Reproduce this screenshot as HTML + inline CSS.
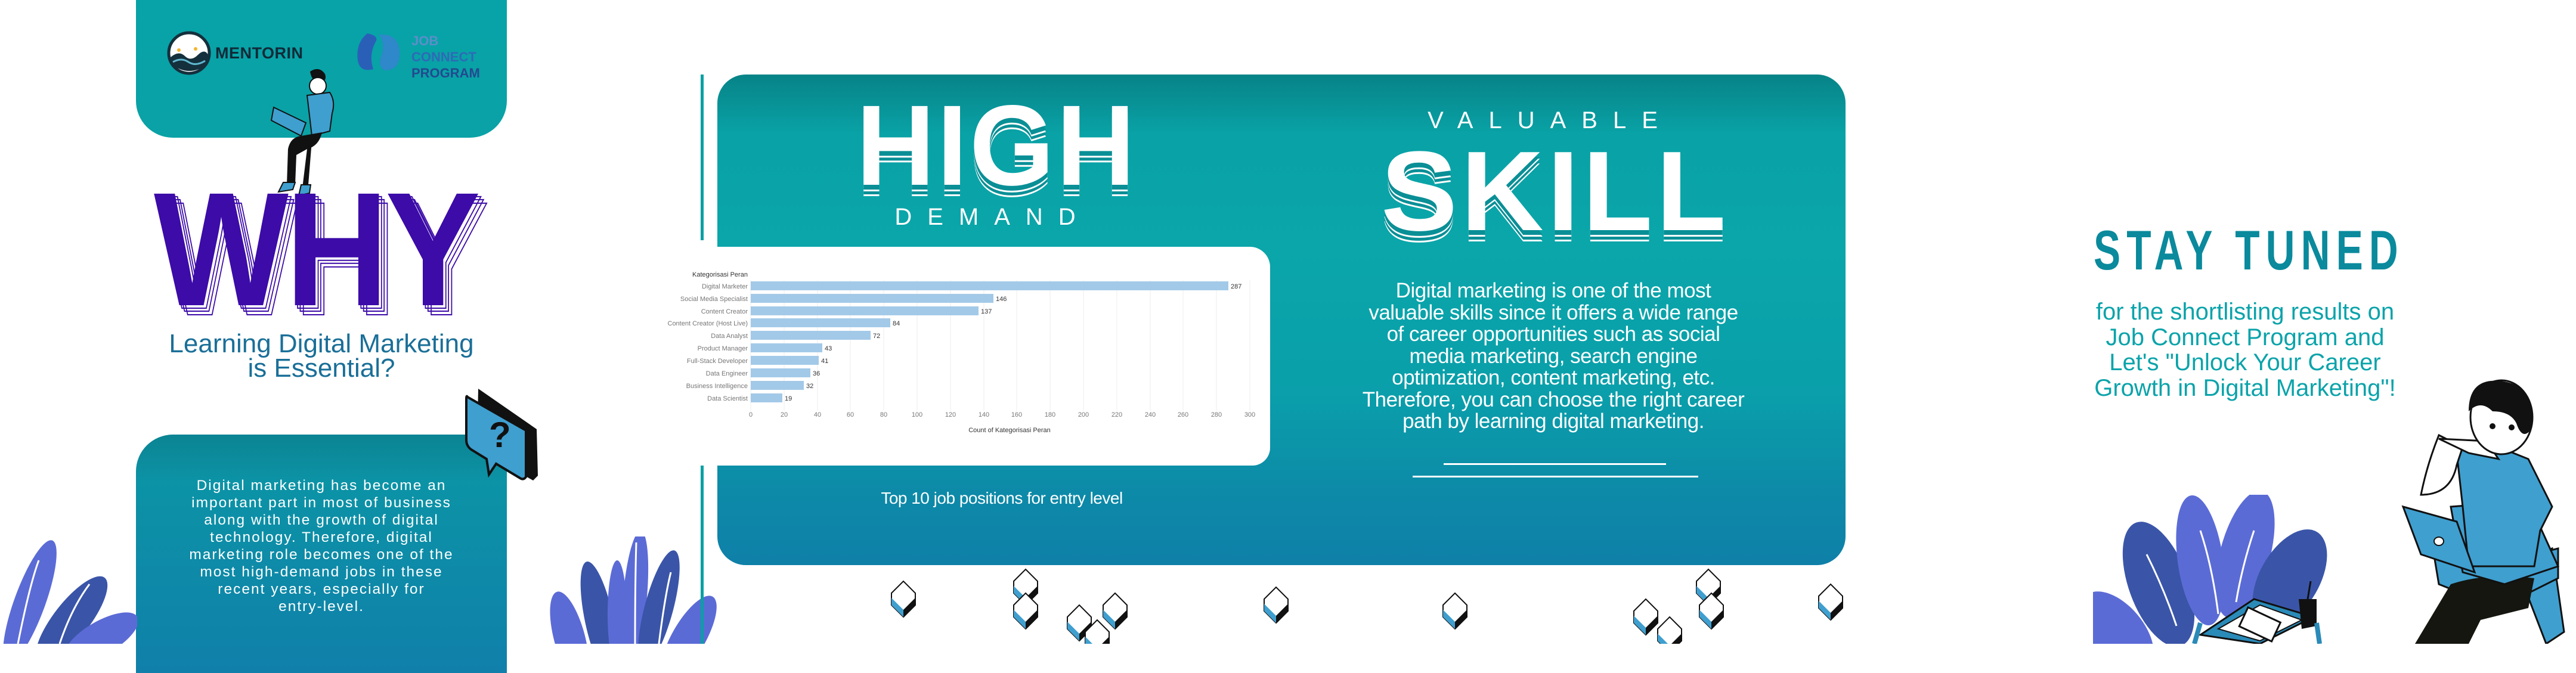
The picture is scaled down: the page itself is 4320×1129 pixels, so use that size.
<!DOCTYPE html>
<html><head><meta charset="utf-8">
<style>
*{margin:0;padding:0;box-sizing:border-box}
body{width:4320px;height:1080px;background:#fff;position:relative;overflow:hidden;font-family:"Liberation Sans",sans-serif}
.abs{position:absolute}
.c{text-align:center;white-space:nowrap}
</style></head><body>

<!-- LEFT PANEL -->
<div class="abs" style="left:228px;top:0;width:622px;height:231px;background:linear-gradient(#07a3a8,#0aa2a6);border-radius:0 0 62px 62px"></div>
<svg class="abs" style="left:280px;top:52px" width="74" height="74" viewBox="0 0 74 74">
<circle cx="37" cy="37" r="34" fill="#fff" stroke="#14303c" stroke-width="5"/>
<path d="M6 44 Q20 32 30 42 T52 40 T70 42 L68 56 Q37 78 8 56Z" fill="#14303c"/>
<path d="M10 52 Q24 44 36 52 T64 50" stroke="#5fb8d0" stroke-width="3" fill="none"/>
<circle cx="20" cy="32" r="3" fill="#f2b630"/><circle cx="48" cy="30" r="3" fill="#f2b630"/>
</svg>
<div class="abs" style="left:361px;top:74px;font-size:27px;font-weight:bold;color:#102a38;letter-spacing:0.5px">MENTORIN</div>
<svg class="abs" style="left:596px;top:52px" width="80" height="72" viewBox="0 0 80 72">
<path d="M20 4 Q0 20 4 50 Q8 70 30 64 Q22 40 34 18 Q40 8 20 4Z" fill="#2a5fb8"/>
<path d="M40 6 Q72 4 74 34 Q76 66 50 66 Q36 60 44 40 Q50 22 40 6Z" fill="#2e88c9"/>
</svg>
<div class="abs" style="left:690px;top:55px;font-size:22px;font-weight:bold;line-height:27px;color:#2e6ab6">
<span style="color:#5b8fc9">JOB</span><br>CONNECT<br><span style="color:#24498f">PROGRAM</span></div>
<svg class="abs" style="left:445px;top:110px" width="135" height="220" viewBox="0 0 135 220">
<path d="M75 10 Q90 0 100 14 Q104 26 92 30 Q78 28 75 10Z" fill="#111"/>
<ellipse cx="88" cy="34" rx="14" ry="14" fill="#fff" stroke="#111" stroke-width="2"/>
<path d="M70 50 L108 45 Q118 60 112 80 L108 110 L78 118 Z" fill="#3f9fcf" stroke="#111" stroke-width="2"/>
<path d="M14 70 L68 96 L60 118 L10 92Z" fill="#3f9fcf" stroke="#111" stroke-width="2"/>
<path d="M60 118 L95 112 Q90 135 70 140 L52 150 L50 200 L36 200 L38 140 Q42 120 60 118Z" fill="#111"/>
<path d="M70 140 L78 126 L72 200 L62 206 Z" fill="#111"/>
<path d="M30 196 L50 196 L46 208 L22 212Z" fill="#3f9fcf" stroke="#111" stroke-width="2"/>
<path d="M60 200 L76 200 L74 214 L56 218Z" fill="#3f9fcf" stroke="#111" stroke-width="2"/>
</svg>
<div class="abs" style="left:258px;top:282px;font-size:272px;font-weight:900;color:transparent;-webkit-text-stroke:2px #3c0ba8;letter-spacing:-6px;transform:scaleX(0.88);transform-origin:left top;line-height:1">
<span class="abs" style="left:16px;top:16px">WHY</span><span class="abs" style="left:10px;top:10px">WHY</span><span class="abs" style="left:5px;top:5px">WHY</span>
<span style="position:relative;color:#3c0ba8;-webkit-text-stroke:0">WHY</span></div>
<div class="abs c" style="left:228px;width:622px;top:556px;font-size:44px;line-height:41px;color:#1a6f98">Learning Digital Marketing<br>is Essential?</div>
<div class="abs" style="left:228px;top:729px;width:622px;height:400px;background:linear-gradient(#0b8493,#0c93a6 20%,#1080aa);border-radius:62px 62px 0 0"></div>
<div class="abs c" style="left:228px;width:622px;top:800px;font-size:24.5px;line-height:29px;color:#fff;letter-spacing:2px">Digital marketing has become an<br>important part in most of business<br>along with the growth of digital<br>technology. Therefore, digital<br>marketing role becomes one of the<br>most high-demand jobs in these<br>recent years, especially for<br>entry-level.</div>
<svg class="abs" style="left:780px;top:650px" width="128" height="162" viewBox="0 0 128 162">
<path d="M22 2 L120 70 L122 148 L114 156 L20 102 L22 2Z" fill="#111"/>
<path d="M4 16 L102 72 L102 150 Q98 156 92 152 L52 128 L40 146 L36 120 L10 104 Q2 98 2 88 L2 20 Q2 12 4 16Z" fill="#3f9fcf" stroke="#111" stroke-width="4"/>
<text x="40" y="100" font-size="60" font-weight="bold" fill="#111" font-family="Liberation Sans">?</text>
</svg>
<svg class="abs" style="left:0;top:900px" width="230" height="180" viewBox="0 0 230 180">
<ellipse cx="50" cy="110" rx="26" ry="110" transform="rotate(20 50 110)" fill="#5b6bd6"/>
<ellipse cx="120" cy="140" rx="30" ry="90" transform="rotate(38 120 140)" fill="#3a55a8"/>
<ellipse cx="170" cy="170" rx="28" ry="70" transform="rotate(60 170 170)" fill="#5b6bd6"/>
<path d="M30 180 Q50 80 65 40 M100 180 Q120 120 150 80" stroke="#fff" stroke-width="3" fill="none"/>
</svg>
<svg class="abs" style="left:915px;top:900px" width="370" height="180" viewBox="0 0 370 180">
<ellipse cx="150" cy="100" rx="20" ry="110" transform="rotate(5 150 100)" fill="#5b6bd6"/>
<ellipse cx="190" cy="120" rx="24" ry="100" transform="rotate(15 190 120)" fill="#3a55a8"/>
<ellipse cx="90" cy="140" rx="24" ry="100" transform="rotate(-12 90 140)" fill="#3a55a8"/>
<ellipse cx="40" cy="170" rx="26" ry="80" transform="rotate(-15 40 170)" fill="#5b6bd6"/>
<ellipse cx="240" cy="170" rx="28" ry="80" transform="rotate(30 240 170)" fill="#5b6bd6"/>
<ellipse cx="120" cy="130" rx="16" ry="90" fill="#5b6bd6"/>
<path d="M150 180 Q150 80 152 10 M190 180 Q200 100 210 60" stroke="#fff" stroke-width="3" fill="none"/>
</svg>

<!-- CENTER -->
<div class="abs" style="left:1175px;top:125px;width:5px;height:278px;background:#0aa0a4"></div>
<div class="abs" style="left:1175px;top:781px;width:5px;height:299px;background:#0aa0a4"></div>
<div class="abs" style="left:1203px;top:125px;width:1892px;height:823px;border-radius:48px;background:linear-gradient(#078387 0%,#09a2a6 12%,#0aa6aa 35%,#0a9faa 65%,#0d8aa8 85%,#0f80a8 100%)"></div>
<div class="abs" style="left:1436px;top:148px;font-size:192px;font-weight:900;color:#fff;line-height:1;letter-spacing:4px;transform:scaleX(0.95);transform-origin:left top;text-shadow:0 8px 0 #0a8f96,0 11px 0 #fff,0 16px 0 #0a8f96,0 19px 0 #fff">HIGH</div>
<div class="abs c" style="left:1450px;width:430px;top:342px;font-size:40px;color:#fff;letter-spacing:26px;font-weight:300">DEMAND</div>
<div class="abs c" style="left:2350px;width:500px;top:180px;font-size:40px;color:#fff;letter-spacing:26px">VALUABLE</div>
<div class="abs" style="left:2316px;top:226px;font-size:190px;font-weight:900;color:#fff;line-height:1;letter-spacing:6px;transform:scaleX(1.01);transform-origin:left top;text-shadow:0 8px 0 #0a8f96,0 11px 0 #fff,0 16px 0 #0a8f96,0 19px 0 #fff">SKILL</div>
<div class="abs" style="left:1096px;top:414px;width:1034px;height:367px;background:#fff;border-radius:0 34px 30px 0"></div>
<svg class="abs" style="left:1096px;top:414px" width="1034" height="367" viewBox="0 0 1034 367" font-family="Liberation Sans Narrow, Liberation Sans, sans-serif" font-size="11" fill="#777">
<text x="65" y="50" fill="#333" font-size="11">Kategorisasi Peran</text>
<g stroke="#eee" stroke-width="1">
<line x1="163" y1="56" x2="163" y2="275"/><line x1="219" y1="56" x2="219" y2="275"/><line x1="275" y1="56" x2="275" y2="275"/><line x1="330" y1="56" x2="330" y2="275"/><line x1="386" y1="56" x2="386" y2="275"/><line x1="442" y1="56" x2="442" y2="275"/><line x1="498" y1="56" x2="498" y2="275"/><line x1="554" y1="56" x2="554" y2="275"/><line x1="609" y1="56" x2="609" y2="275"/><line x1="665" y1="56" x2="665" y2="275"/><line x1="721" y1="56" x2="721" y2="275"/><line x1="777" y1="56" x2="777" y2="275"/><line x1="833" y1="56" x2="833" y2="275"/><line x1="888" y1="56" x2="888" y2="275"/><line x1="944" y1="56" x2="944" y2="275"/><line x1="1000" y1="56" x2="1000" y2="275"/>
</g>
<g fill="#a3c9e8">
<rect x="163" y="58" width="801" height="15"/><rect x="163" y="79" width="407" height="15"/><rect x="163" y="100" width="382" height="15"/><rect x="163" y="120" width="234" height="15"/><rect x="163" y="141" width="201" height="15"/><rect x="163" y="162" width="120" height="15"/><rect x="163" y="183" width="114" height="15"/><rect x="163" y="204" width="100" height="15"/><rect x="163" y="225" width="89" height="15"/><rect x="163" y="246" width="53" height="15"/>
</g>
<g text-anchor="end">
<text x="158" y="70">Digital Marketer</text><text x="158" y="91">Social Media Specialist</text><text x="158" y="112">Content Creator</text><text x="158" y="132">Content Creator (Host Live)</text><text x="158" y="153">Data Analyst</text><text x="158" y="174">Product Manager</text><text x="158" y="195">Full-Stack Developer</text><text x="158" y="216">Data Engineer</text><text x="158" y="237">Business Intelligence</text><text x="158" y="258">Data Scientist</text>
</g>
<g fill="#333"><text x="968" y="70">287</text><text x="574" y="91">146</text><text x="549" y="112">137</text><text x="401" y="132">84</text><text x="368" y="153">72</text><text x="287" y="174">43</text><text x="281" y="195">41</text><text x="267" y="216">36</text><text x="256" y="237">32</text><text x="220" y="258">19</text></g>
<g text-anchor="middle"><text x="163" y="285">0</text><text x="219" y="285">20</text><text x="275" y="285">40</text><text x="330" y="285">60</text><text x="386" y="285">80</text><text x="442" y="285">100</text><text x="498" y="285">120</text><text x="554" y="285">140</text><text x="609" y="285">160</text><text x="665" y="285">180</text><text x="721" y="285">200</text><text x="777" y="285">220</text><text x="833" y="285">240</text><text x="888" y="285">260</text><text x="944" y="285">280</text><text x="1000" y="285">300</text>
<text x="597" y="311" fill="#333">Count of Kategorisasi Peran</text></g>
</svg>
<div class="abs c" style="left:1380px;width:600px;top:820px;font-size:28px;color:#fff;letter-spacing:-0.5px">Top 10 job positions for entry level</div>
<div class="abs c" style="left:2205px;width:800px;top:470px;font-size:35px;line-height:36.5px;color:#fff;letter-spacing:-0.5px">Digital marketing is one of the most<br>valuable skills since it offers a wide range<br>of career opportunities such as social<br>media marketing, search engine<br>optimization, content marketing, etc.<br>Therefore, you can choose the right career<br>path by learning digital marketing.</div>
<div class="abs" style="left:2421px;top:777px;width:373px;height:3px;background:#fff"></div>
<div class="abs" style="left:2369px;top:798px;width:479px;height:3px;background:#fff"></div>

<svg class="abs" style="left:1470px;top:945px" width="1650" height="135" viewBox="0 0 1650 135">
<defs><g id="pz"><path d="M0 20 L20 0 L40 20 L40 40 L20 60 L0 40Z" fill="#fff" stroke="#111" stroke-width="2"/><path d="M20 60 L40 40 L40 20" fill="none" stroke="#111" stroke-width="2"/><path d="M0 40 L20 60 L20 48 L0 28Z" fill="#3f9fcf"/><path d="M20 60 L40 40 L40 28 L20 48Z" fill="#111"/></g></defs>
<use href="#pz" x="25" y="30"/><use href="#pz" x="230" y="10"/><use href="#pz" x="230" y="50"/>
<use href="#pz" x="320" y="70"/><use href="#pz" x="380" y="50"/><use href="#pz" x="350" y="95"/>
<use href="#pz" x="650" y="40"/><use href="#pz" x="950" y="50"/>
<use href="#pz" x="1270" y="60"/><use href="#pz" x="1310" y="90"/><use href="#pz" x="1375" y="10"/><use href="#pz" x="1380" y="50"/><use href="#pz" x="1580" y="35"/>
</svg>

<!-- RIGHT -->
<div class="abs c" style="left:3427px;width:600px;top:373px;font-size:94px;font-weight:bold;font-family:'Liberation Sans Narrow','Liberation Sans',sans-serif;letter-spacing:14px;color:#0a8a9c;transform:scaleX(0.72);line-height:1">STAY TUNED</div>
<div class="abs c" style="left:3465px;width:600px;top:502px;font-size:40px;line-height:42.5px;color:#0aa3aa">for the shortlisting results on<br>Job Connect Program and<br>Let's "Unlock Your Career<br>Growth in Digital Marketing"!</div>
<svg class="abs" style="left:3510px;top:830px" width="500" height="250" viewBox="0 0 500 250">
<ellipse cx="110" cy="150" rx="50" ry="110" transform="rotate(-20 110 150)" fill="#3a55a8"/>
<ellipse cx="180" cy="110" rx="38" ry="110" transform="rotate(-8 180 110)" fill="#5b6bd6"/>
<ellipse cx="255" cy="100" rx="42" ry="110" transform="rotate(15 255 100)" fill="#5b6bd6"/>
<ellipse cx="330" cy="140" rx="50" ry="90" transform="rotate(30 330 140)" fill="#3a55a8"/>
<ellipse cx="40" cy="230" rx="45" ry="80" transform="rotate(-40 40 230)" fill="#5b6bd6"/>
<path d="M90 100 Q120 160 140 220 M180 60 Q200 120 210 200 M270 60 Q250 120 240 180" stroke="#fff" stroke-width="3" fill="none"/>
</svg>
<svg class="abs" style="left:3660px;top:975px" width="360" height="105" viewBox="0 0 360 105">
<path d="M30 90 L120 30 L220 60 L130 105Z" fill="#2a8ab8" stroke="#111" stroke-width="3"/>
<path d="M60 80 L130 40 L200 65 L130 100Z" fill="#fff" stroke="#111" stroke-width="2"/>
<rect x="100" y="55" width="60" height="35" transform="rotate(25 130 72)" fill="#fff" stroke="#111" stroke-width="3"/>
<path d="M195 30 L225 30 L225 75 L200 80Z" fill="#111"/>
<line x1="210" y1="30" x2="215" y2="0" stroke="#111" stroke-width="3"/>
<path d="M20 105 L30 70 M230 105 L225 70" stroke="#2a8ab8" stroke-width="8"/>
</svg>
<svg class="abs" style="left:3990px;top:620px" width="330" height="460" viewBox="0 0 330 460">
<path d="M230 330 L290 300 L310 440 L280 460 Z" fill="#3f9fcf" stroke="#111" stroke-width="3"/>
<path d="M90 300 L220 320 L300 300 L300 350 L200 400 L100 360Z" fill="#3f9fcf" stroke="#111" stroke-width="3"/>
<path d="M60 460 L120 360 Q180 340 260 350 L250 400 L170 420 L150 460Z" fill="#14160f"/>
<path d="M120 230 L250 220 L300 330 L210 360 L140 340Z" fill="#3f9fcf" stroke="#111" stroke-width="3"/>
<path d="M130 140 Q160 120 200 130 L250 150 L290 230 L270 270 L260 330 L150 330 L140 230Z" fill="#3f9fcf" stroke="#111" stroke-width="3"/>
<path d="M100 110 Q80 160 70 210 Q120 210 130 160 L140 130Z" fill="#fff" stroke="#111" stroke-width="3"/>
<path d="M100 116 L180 120 L200 150 L150 140Z" fill="#fff" stroke="#111" stroke-width="3"/>
<ellipse cx="205" cy="80" rx="52" ry="62" fill="#fff" stroke="#111" stroke-width="3"/>
<path d="M150 70 Q150 10 210 20 Q265 30 255 100 Q240 120 230 90 Q220 70 190 70 Q170 50 150 70Z" fill="#111"/>
<circle cx="190" cy="95" r="5" fill="#111"/><circle cx="222" cy="97" r="5" fill="#111"/>
<path d="M40 230 L130 255 L160 340 L70 310Z" fill="#3f9fcf" stroke="#111" stroke-width="3"/>
<ellipse cx="100" cy="288" rx="8" ry="7" fill="#fff" stroke="#111" stroke-width="2"/>
</svg>
</body></html>
